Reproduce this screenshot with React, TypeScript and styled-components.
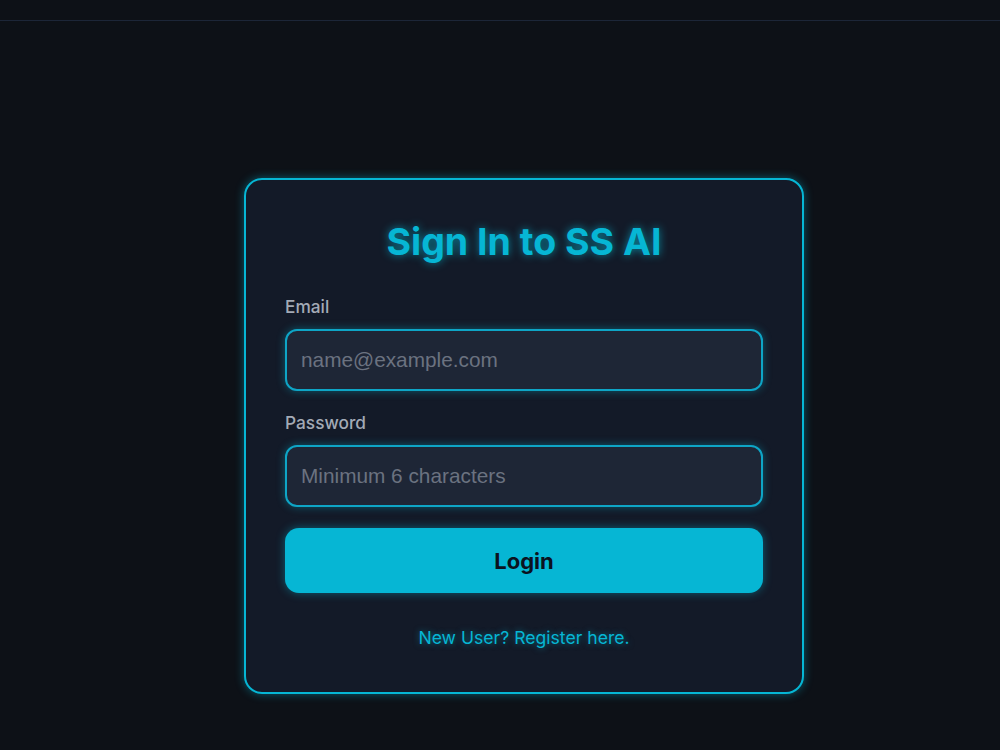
import React from "react";
import styled, { createGlobalStyle } from "styled-components";

const Global = createGlobalStyle`
  html, body { margin: 0; padding: 0; background: #0d1117; }
  body { font-family: Inter, "Noto Sans", sans-serif; color: #e5e7eb; }
  * { box-sizing: border-box; }
`;

const Page = styled.div`
  min-height: 750px;
  background: #0d1117;
  display: flex;
  flex-direction: column;
`;

const TopBar = styled.header`
  height: 21px;
  border-bottom: 1px solid #1c2638;
  background: #0d1117;
`;

const Main = styled.main`
  display: flex;
  justify-content: center;
  padding-top: 157px;
  padding-left: 48px;
`;

const Card = styled.form`
  width: 560px;
  height: 516px;
  background: #131a28;
  border: 2px solid #06b6d4;
  border-radius: 18px;
  box-shadow: 0 0 10px rgba(6, 182, 212, 0.45);
  padding: 38px 39px;
  display: flex;
  flex-direction: column;
`;

const Title = styled.h1`
  margin: 0 0 30px;
  text-align: center;
  font-family: Inter, sans-serif;
  font-weight: 700;
  font-size: 37.5px;
  line-height: 48px;
  color: #06b6d4;
  text-shadow: 0 0 8px rgba(6, 182, 212, 0.7);
`;

const Field = styled.div`
  display: flex;
  flex-direction: column;
  gap: 11px;
  margin-bottom: 21px;
`;

const Label = styled.label`
  font-family: Inter, sans-serif;
  font-size: 17.3px;
  font-weight: 500;
  line-height: 22px;
  color: #a3aab6;
`;

const Input = styled.input`
  width: 100%;
  height: 62px;
  padding: 0 14px;
  background: #1e2636;
  border: 2px solid #0ea5c6;
  border-radius: 12px;
  box-shadow: 0 0 8px rgba(6, 182, 212, 0.4);
  font-family: "Liberation Sans", Arial, sans-serif;
  font-size: 20.8px;
  color: #e5e7eb;
  outline: none;
  &::placeholder { color: #6b7280; }
`;

const Button = styled.button`
  width: 100%;
  height: 65px;
  flex: none;
  background: #06b6d4;
  border: none;
  border-radius: 14px;
  box-shadow: 0 0 10px rgba(6, 182, 212, 0.45);
  font-family: Inter, sans-serif;
  font-size: 22px;
  font-weight: 700;
  color: #0b1220;
  cursor: pointer;
`;

const Footer = styled.p`
  margin: 34px 0 0;
  text-align: center;
  font-family: Inter, sans-serif;
  font-size: 17.6px;
  line-height: 22px;
`;

const Link = styled.a`
  color: #06b6d4;
  text-decoration: none;
  text-shadow: 0 0 6px rgba(6, 182, 212, 0.55);
`;

export default function App() {
  return (
    <Page>
      <Global />
      <TopBar />
      <Main>
        <Card onSubmit={(e) => e.preventDefault()}>
          <Title>Sign In to SS AI</Title>
          <Field>
            <Label htmlFor="email">Email</Label>
            <Input id="email" type="email" placeholder="name@example.com" />
          </Field>
          <Field>
            <Label htmlFor="password">Password</Label>
            <Input id="password" type="password" placeholder="Minimum 6 characters" />
          </Field>
          <Button type="submit">Login</Button>
          <Footer>
            <Link href="#">New User? Register here.</Link>
          </Footer>
        </Card>
      </Main>
    </Page>
  );
}
